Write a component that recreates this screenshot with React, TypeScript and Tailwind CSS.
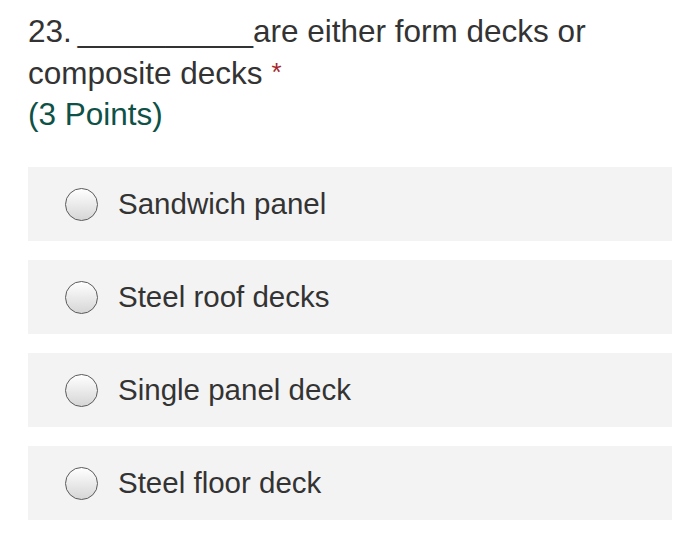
import React from "react";

const options = ["Sandwich panel", "Steel roof decks", "Single panel deck", "Steel floor deck"];

export default function App() {
  return (
    <div className="w-[700px] h-[550px] bg-white text-[#333333]" style={{ fontFamily: '"Liberation Sans", Arial, sans-serif' }}>
      <div className="pl-[28px] pr-[28px] pt-[11px]">
        <div className="text-[31.5px] leading-[41px]">
          23.<span className="ml-[6px]">__________</span>are either form decks or composite decks{" "}
          <span className="text-[#a4262c] text-[26px] align-[3px]">*</span>
        </div>
        <div className="text-[31.5px] leading-[40px] text-[#0e5147]">(3 Points)</div>
      </div>
      <div className="mt-[33px] flex flex-col gap-[19px] pl-[28px] pr-[28px]">
        {options.map((o) => (
          <div key={o} className="h-[74px] bg-[#f3f3f3] flex items-center pl-[37px]">
            <div className="w-[33px] h-[33px] rounded-full border-[1.5px] border-[#5a5a5a] bg-gradient-to-b from-white to-[#d6d6d6] shrink-0" />
            <span className="ml-[20px] text-[29.5px] leading-none">{o}</span>
          </div>
        ))}
      </div>
    </div>
  );
}
